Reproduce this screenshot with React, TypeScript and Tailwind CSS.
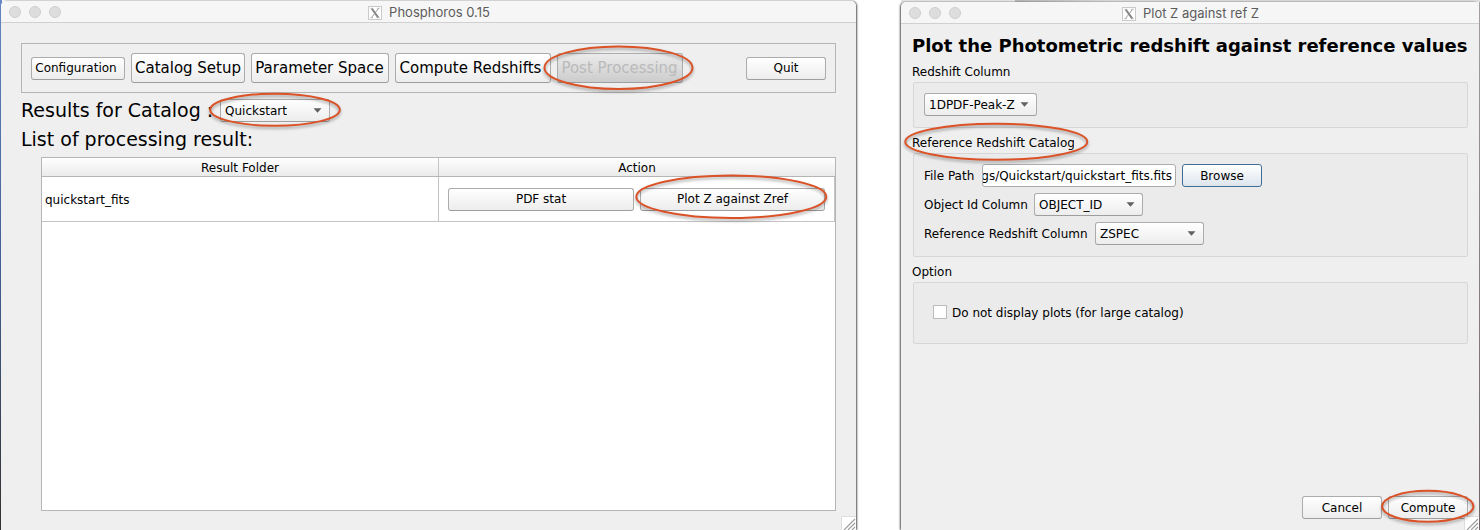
import type { ReactNode } from "react";

const FACE =
  "flex shrink-0 items-center rounded-[3px] border border-[#acacac] border-b-[#9e9e9e] bg-linear-to-b whitespace-nowrap";

function Button({
  className,
  tone = "from-white to-[#ededed]",
  children,
}: {
  className: string;
  tone?: string;
  children: ReactNode;
}) {
  return <button className={`${FACE} justify-center ${tone} ${className}`}>{children}</button>;
}

function Combo({ className, children }: { className: string; children: ReactNode }) {
  return (
    <button className={`${FACE} h-[23px] justify-between from-white to-[#ededed] pl-[4px] pr-[7px] ${className}`}>
      <span>{children}</span>
      <svg width="9" height="5" viewBox="0 0 9 5">
        <path d="M0.5 0.2h8L4.5 4.8z" fill="#626262" />
      </svg>
    </button>
  );
}

function TitleBar({ title }: { title: string }) {
  return (
    <div className="relative flex h-[22px] shrink-0 items-center rounded-t-[5px] border-b border-[#d0d0d0] bg-[#f6f6f6]">
      <div className="flex gap-[8px] pl-[8px]">
        <i className="size-[12px] rounded-full border border-[#cfcfcf] bg-[#dddddd]" />
        <i className="size-[12px] rounded-full border border-[#cfcfcf] bg-[#dddddd]" />
        <i className="size-[12px] rounded-full border border-[#cfcfcf] bg-[#dddddd]" />
      </div>
      <div className="absolute inset-0 flex items-center justify-center gap-[7px] pt-[2px] pl-px font-['Inter',sans-serif] text-[13px] text-[#5c5c5c]">
        <svg width="14" height="14" viewBox="0 0 14 14" fill="none">
          <rect x="0.5" y="0.5" width="13" height="13" fill="#fff" stroke="#cacaca" />
          <path d="M3.7 2.5L10.3 11.7" stroke="#858585" strokeWidth="2" />
          <path d="M10.6 2.3L3.4 11.7" stroke="#909090" strokeWidth="0.9" />
          <path d="M2.4 2.3h3M8.9 2.3h2.8M2.2 11.7h2.8M8.9 11.7h3" stroke="#aaa" strokeWidth="0.7" />
        </svg>
        <span className="whitespace-nowrap">{title}</span>
      </div>
    </div>
  );
}

function Grip() {
  return (
    <svg width="15" height="14" viewBox="0 0 15 14" className="absolute right-0 bottom-0">
      <rect width="15" height="14" fill="#fff" />
      <path d="M0.5 14V0.5H15" fill="none" stroke="#dedede" />
      <path d="M3 14L14 3M7 14L14 7M11 14L14 11" stroke="#9a9a9a" strokeWidth="1.1" />
    </svg>
  );
}

const RINGS = [
  [618.5, 67.7, 74, 21.3],
  [275, 109.8, 64.8, 16],
  [731.3, 196.8, 95, 21.2],
  [996.3, 141.8, 91, 18],
  [1427.8, 506.3, 45.7, 15.5],
];

export default function App() {
  return (
    <div className="relative flex h-[530px] w-[1480px] overflow-hidden bg-white font-['DejaVu_Sans',sans-serif] text-[12px] leading-none text-black">
      <div className="flex w-[860px] shrink-0 bg-linear-to-b from-[#6688c8] via-[#41619b] to-[#32302d] bg-[length:2px_530px] bg-no-repeat pt-px pl-px">
        <div className="relative flex w-[855px] flex-col rounded-t-[5px] bg-[#efefef] shadow-[1px_0_2px_#555]">
          <TitleBar title="Phosphoros 0.15" />
          <div className="mt-[20px] ml-[20px] flex h-[50px] w-[815px] items-center gap-[6px] border border-[#b5b5b5] px-[9px]">
            <Button className="h-[23px] w-[94px] pr-[4px]">Configuration</Button>
            <Button className="h-[30px] w-[114px] text-[15px]">Catalog Setup</Button>
            <Button className="h-[30px] w-[138px] pr-px text-[15px]">Parameter Space</Button>
            <Button className="h-[30px] w-[156px] pr-[5px] text-[15px]">Compute Redshifts</Button>
            <Button tone="from-[#ebebeb] to-[#cccccc]" className="h-[30px] w-[126px] pr-px text-[15px] text-[#bababa]">
              Post Processing
            </Button>
            <Button className="ml-auto h-[23px] w-[80px]">Quit</Button>
          </div>
          <div className="mt-[6px] ml-[20px] flex h-[23px] items-center">
            <div className="w-[199px] text-[19px] whitespace-nowrap">Results for Catalog :</div>
            <Combo className="w-[110px]">Quickstart</Combo>
          </div>
          <div className="mt-[6px] ml-[20px] flex h-[23px] items-center text-[19px]">List of processing result:</div>
          <div className="mt-[6px] ml-[40px] flex h-[354px] w-[795px] flex-col border border-[#b5b5b5] bg-white">
            <div className="flex h-[19px] border-b border-[#b5b5b5] bg-linear-to-b from-white to-[#ebebeb] *:pt-[2px]">
              <div className="flex w-[397px] items-center justify-center border-r border-[#c4c4c4]">Result Folder</div>
              <div className="flex flex-1 items-center justify-center">Action</div>
            </div>
            <div className="flex h-[45px] border-b border-[#c4c4c4]">
              <div className="flex w-[397px] items-center border-r border-[#c4c4c4] pt-[2px] pl-[3px]">quickstart_fits</div>
              <div className="flex flex-1 items-center gap-[6px] border-r border-[#c4c4c4] pl-[9px]">
                <Button className="h-[23px] w-[186px]">PDF stat</Button>
                <Button className="h-[23px] w-[185px]">Plot Z against Zref</Button>
              </div>
            </div>
          </div>
          <Grip />
        </div>
      </div>

      <div className="ml-[41px] flex w-[579px] flex-col bg-linear-to-b from-[#a9a3a5] to-[#6f6668] bg-[length:1px_528px] bg-right-bottom bg-no-repeat">
        <div className="flex h-[2px] shrink-0">
          <div className="w-[114px] bg-[#e8e8e8]" />
          <div className="flex-1 bg-linear-to-r from-[#b8b8b8] to-[#dedede] to-20%" />
        </div>
        <div className="relative flex w-[578px] flex-1 flex-col rounded-t-[5px] bg-[#efefef] shadow-[-1px_0_2px_#555]">
          <TitleBar title="Plot Z against ref Z" />
          <div className="mt-[11px] ml-[11px] flex h-[22px] items-center text-[18px] font-bold whitespace-nowrap">
            Plot the Photometric redshift against reference values
          </div>
          <div className="ml-[11px] flex h-[25px] items-center pt-[5px]">Redshift Column</div>
          <div className="ml-[12px] flex h-[46px] w-[555px] items-center rounded-[2px] border border-[#d7d7d7] bg-[#ebebeb] pb-px pl-[10px]">
            <Combo className="w-[113px]">1DPDF-Peak-Z</Combo>
          </div>
          <div className="ml-[11px] flex h-[25px] w-[162px] items-center overflow-hidden pt-[5px] whitespace-nowrap">
            Reference Redshift Catalog
          </div>
          <div className="ml-[12px] flex h-[104px] w-[555px] flex-col gap-[6px] rounded-[2px] border border-[#d7d7d7] bg-[#ebebeb] pt-[10px] pl-[10px]">
            <div className="flex h-[23px] items-center">
              <span className="w-[58px]">File Path</span>
              <div className="flex h-[23px] w-[194px] items-center justify-end overflow-hidden rounded-[3px] border border-[#acacac] bg-white pr-[3px] whitespace-nowrap">
                gs/Quickstart/quickstart_fits.fits
              </div>
              <button className="ml-[6px] flex h-[23px] w-[80px] items-center justify-center rounded-[3px] border border-[#3f6d96] bg-linear-to-b from-white to-[#dde5ed]">
                Browse
              </button>
            </div>
            <div className="flex h-[23px] items-center">
              <span className="w-[110px]">Object Id Column</span>
              <Combo className="w-[109px]">OBJECT_ID</Combo>
            </div>
            <div className="flex h-[23px] items-center">
              <span className="w-[171px] tracking-[0.04px]">Reference Redshift Column</span>
              <Combo className="w-[109px]">ZSPEC</Combo>
            </div>
          </div>
          <div className="ml-[11px] flex h-[25px] items-center pt-[5px]">Option</div>
          <div className="ml-[12px] flex h-[62px] w-[555px] items-center gap-[5px] rounded-[2px] border border-[#d7d7d7] bg-[#ebebeb] pb-[2px] pl-[19px]">
            <span className="size-[14px] border border-[#bdbdbd] bg-white" />
            <span className="pt-px">Do not display plots (for large catalog)</span>
          </div>
          <div className="mt-auto mr-[11px] mb-[11px] flex justify-end gap-[6px]">
            <Button className="h-[23px] w-[80px]">Cancel</Button>
            <Button className="h-[23px] w-[80px]">Compute</Button>
          </div>
          <Grip />
        </div>
      </div>

      <svg width="1480" height="530" className="pointer-events-none absolute inset-0 drop-shadow-[0_2px_1.5px_rgba(0,0,0,0.35)]">
        {RINGS.map(([cx, cy, rx, ry]) => (
          <ellipse key={cx} cx={cx} cy={cy} rx={rx} ry={ry} fill="none" stroke="#db5227" strokeWidth="2" />
        ))}
      </svg>
    </div>
  );
}
